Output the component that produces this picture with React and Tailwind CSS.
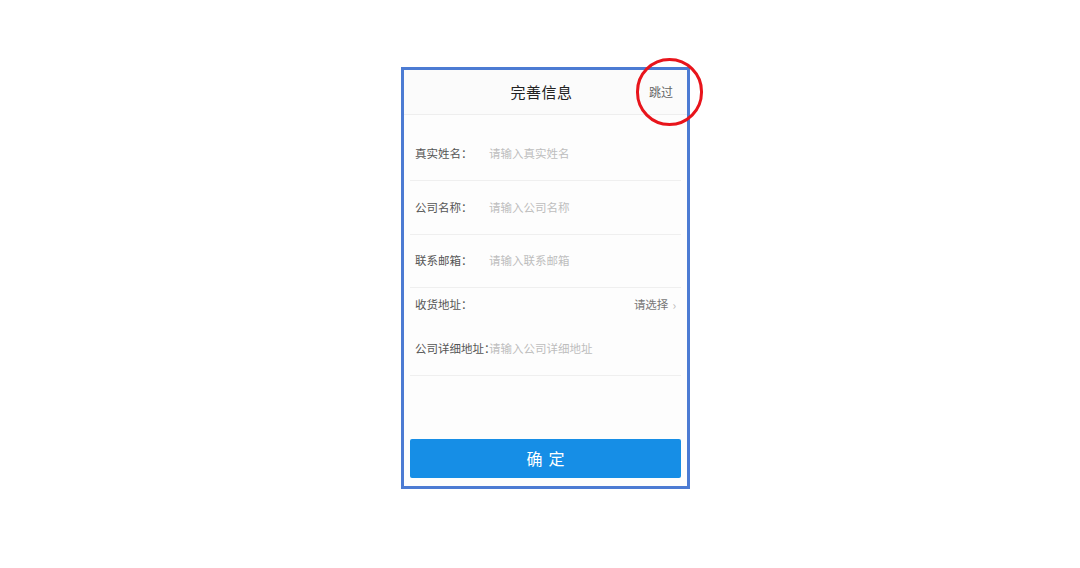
import React from "react";

const font = { fontFamily: '"Noto Sans CJK SC", "Noto Sans", sans-serif' };

function Row({ label, placeholder, className = "" }) {
  return (
    <div className={`flex items-center border-b border-[#efefef] mx-[6px] pl-[5px] ${className}`}>
      <span className="w-[74px] shrink-0 text-[11.5px] text-[#555] whitespace-nowrap">{label}</span>
      <span className="text-[11.5px] text-[#bdbdbd] whitespace-nowrap">{placeholder}</span>
    </div>
  );
}

export default function App() {
  return (
    <div className="w-[1080px] h-[568px] bg-white pl-[401px] pt-[67px]" style={font}>
      <div className="relative w-[289px] h-[422px] border-[3px] border-[#4c7bd3] bg-[#fdfdfd] flex flex-col">
        <div className="relative h-[45px] shrink-0 flex items-center justify-center border-b border-[#eeeeee] bg-[#fbfbfb]">
          <span className="text-[15px] text-[#222] tracking-[0.5px] mr-[8px]">完善信息</span>
          <span className="absolute right-[14px] text-[12px] text-[#666]">跳过</span>
        </div>
        <div className="h-[13px] shrink-0" />
        <Row label="真实姓名：" placeholder="请输入真实姓名" className="h-[53px]" />
        <Row label="公司名称：" placeholder="请输入公司名称" className="h-[54px]" />
        <Row label="联系邮箱：" placeholder="请输入联系邮箱" className="h-[53px]" />
        <div className="flex items-center h-[34px] mx-[6px] pl-[5px] pr-[5px]">
          <span className="w-[74px] shrink-0 text-[11.5px] text-[#555] whitespace-nowrap">收货地址：</span>
          <span className="ml-auto text-[11.5px] text-[#777] flex items-center gap-[4px]">
            请选择
            <span className="text-[#bbb] text-[12px] leading-none">›</span>
          </span>
        </div>
        <Row label="公司详细地址：" placeholder="请输入公司详细地址" className="h-[54px]" />
        <div className="flex-1" />
        <div className="mx-[6px] mb-[8px] h-[39px] rounded-[2px] bg-[#168ee6] flex items-center justify-center">
          <span className="text-white text-[16px] leading-none tracking-[6px] pl-[6px] mb-[2px]">确定</span>
        </div>
        <div className="absolute left-[232px] top-[-12px] w-[67px] h-[68px] rounded-full border-[3px] border-[#e8141b]" />
      </div>
    </div>
  );
}
